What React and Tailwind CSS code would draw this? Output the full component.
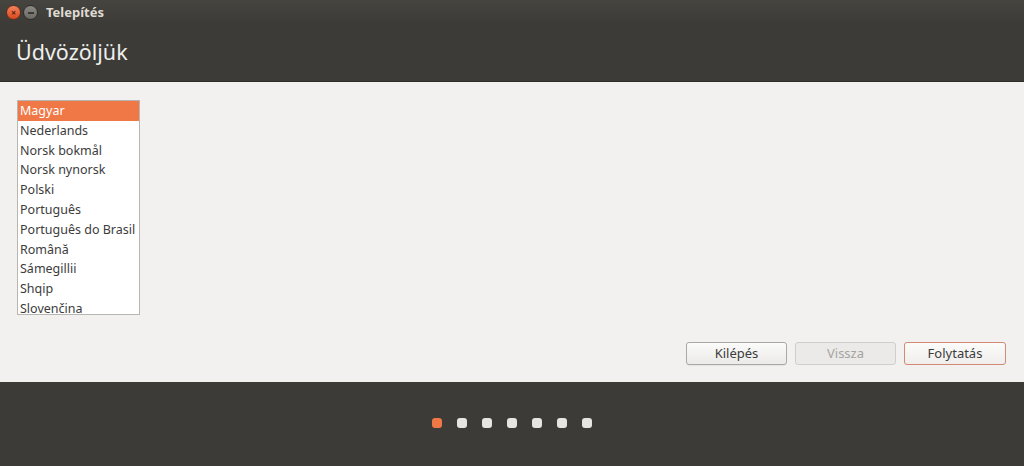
import { useState } from 'react'

const languages = [
  'Magyar',
  'Nederlands',
  'Norsk bokmål',
  'Norsk nynorsk',
  'Polski',
  'Português',
  'Português do Brasil',
  'Română',
  'Sámegillii',
  'Shqip',
  'Slovenčina',
]

export default function App() {
  const [selected, setSelected] = useState(0)

  return (
    <div className="w-[1024px] h-[466px] flex flex-col bg-[#f2f1f0] overflow-hidden" style={{ fontFamily: '"Noto Sans", "Open Sans", sans-serif' }}>
      {/* TITLE BAR */}
      <div className="h-[25px] flex items-center bg-gradient-to-b from-[#45443f] to-[#3c3b37] px-[6px]">
        <div className="w-[15px] h-[15px] rounded-full bg-gradient-to-b from-[#f5825a] to-[#d9461a] border border-[#5a3022] flex items-center justify-center text-[#5a1f0c] text-[9px] leading-none font-bold">×</div>
        <div className="ml-[2px] w-[15px] h-[15px] rounded-full bg-gradient-to-b from-[#8a8983] to-[#6b6a65] border border-[#2e2d2a] flex items-center justify-center">
          <div className="w-[6px] h-[2px] bg-[#3a3935]" />
        </div>
        <span className="ml-[8px] text-[13px] font-bold text-[#dfdbd2]">Telepítés</span>
      </div>

      {/* HEADER */}
      <div className="h-[57px] bg-[#3c3b37] flex items-center px-[16px] border-b border-[#2e2d2a]">
        <h1 className="text-[21.5px] text-[#eeeeec] leading-none mt-[-3px]">Üdvözöljük</h1>
      </div>

      {/* CONTENT */}
      <div className="flex-1 flex flex-col px-[17px] pt-[18px] pb-[17px]">
        <div className="w-[123px] h-[215px] bg-white border border-[#b8b6b2] overflow-hidden">
          {languages.map((l, i) => (
            <div
              key={l}
              onClick={() => setSelected(i)}
              className={`h-[19.8px] px-[2px] text-[12.5px] leading-[19.8px] whitespace-nowrap ${i === selected ? 'bg-[#f07746] text-white' : 'text-[#3c3c3c]'}`}
            >
              {l}
            </div>
          ))}
        </div>

        <div className="flex-1" />

        <div className="flex justify-end gap-[8px] pr-[1px]">
          <button className="w-[101px] h-[23px] rounded-[3px] border border-[#aaa8a4] bg-gradient-to-b from-[#fbfbfa] to-[#ebeae8] text-[13px] text-[#3c3c3c] shadow-[0_1px_0_rgba(0,0,0,0.05)]">Kilépés</button>
          <button className="w-[101px] h-[23px] rounded-[3px] border border-[#d0cecb] bg-[#ebeae8] text-[13px] text-[#a6a4a0]">Vissza</button>
          <button className="w-[102px] h-[23px] rounded-[3px] border border-[#d28a74] bg-gradient-to-b from-[#fbfbfa] to-[#efeeec] text-[13px] text-[#3c3c3c]">Folytatás</button>
        </div>
      </div>

      {/* FOOTER */}
      <div className="h-[84px] bg-[#3c3b37] flex items-center justify-center gap-[15px] pb-[2px]">
        {languages.slice(0, 7).map((_, i) => (
          <div key={i} className={`w-[10px] h-[10px] rounded-[3px] ${i === 0 ? 'bg-[#f07746]' : 'bg-[#e6e5e2]'}`} />
        ))}
      </div>
    </div>
  )
}
